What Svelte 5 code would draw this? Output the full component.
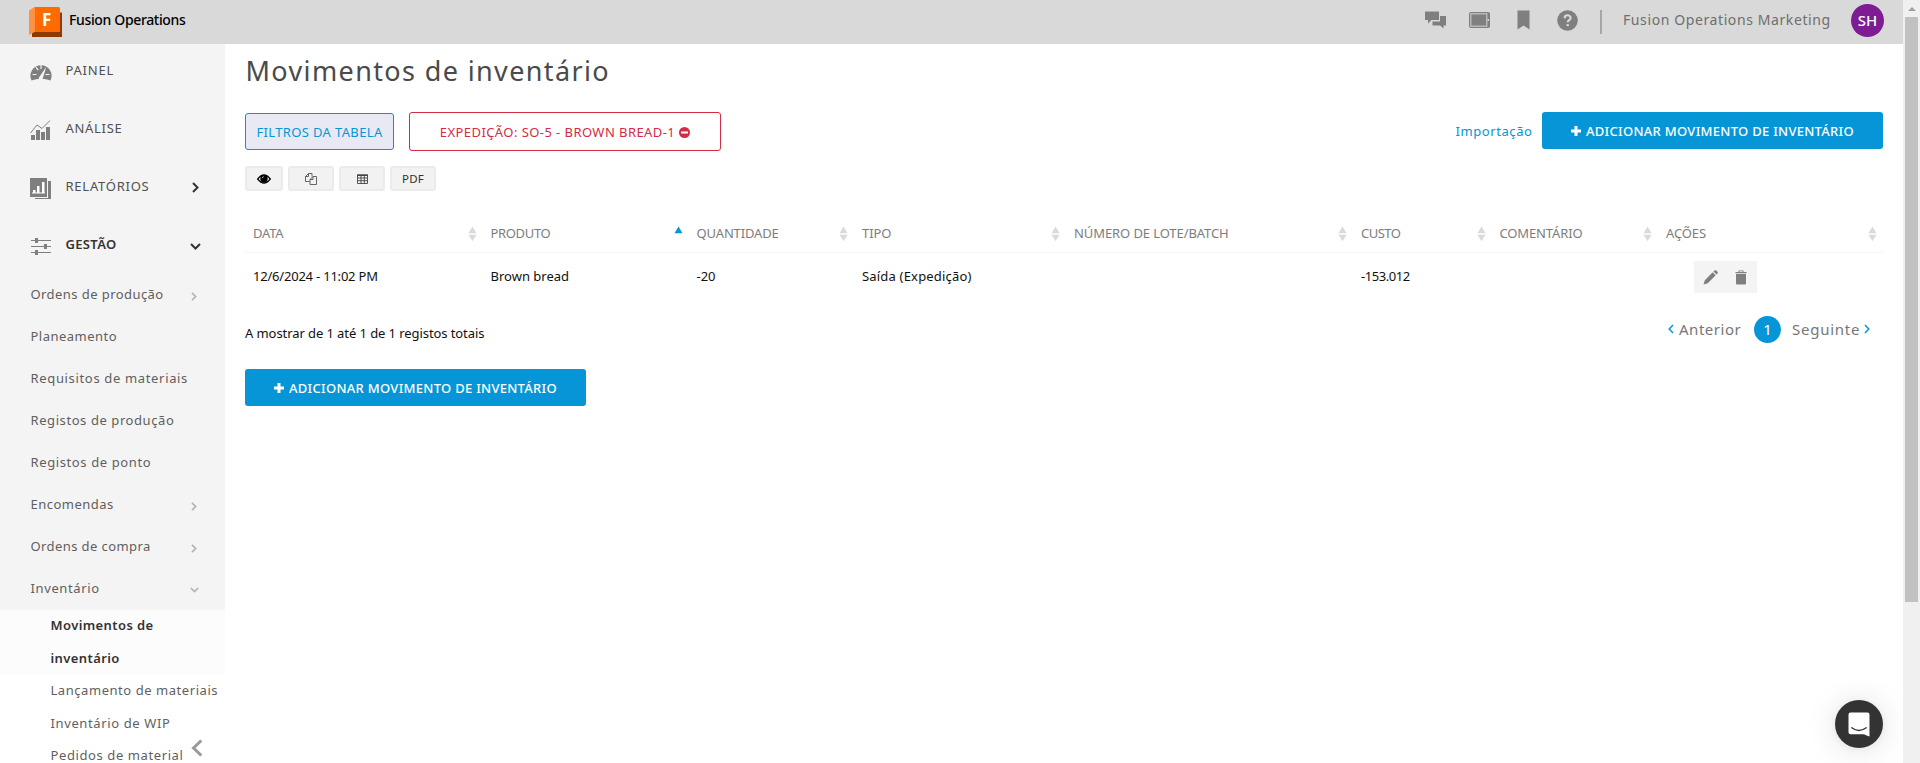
<script>
  const sections = [
    { label: 'PAINEL', icon: 'gauge', spacing: 0.79 },
    { label: 'ANÁLISE', icon: 'chart', spacing: 0.7 },
    { label: 'RELATÓRIOS', icon: 'report', spacing: 0.75, arrow: 'right' },
    { label: 'GESTÃO', icon: 'sliders', spacing: 0.34, arrow: 'down', active: true }
  ];

  const management = [
    { label: 'Ordens de produção', spacing: 0.43, arrow: 'right' },
    { label: 'Planeamento', spacing: 0.48 },
    { label: 'Requisitos de materiais', spacing: 0.66 },
    { label: 'Registos de produção', spacing: 0.58 },
    { label: 'Registos de ponto', spacing: 0.61 },
    { label: 'Encomendas', spacing: 0.48, arrow: 'right' },
    { label: 'Ordens de compra', spacing: 0.41, arrow: 'right' },
    { label: 'Inventário', spacing: 0.62, arrow: 'down' }
  ];

  const inventory = [
    { label: 'Movimentos de inventário', spacing: 0.4, active: true },
    { label: 'Lançamento de materiais', spacing: 0.55 },
    { label: 'Inventário de WIP', spacing: 0.62 },
    { label: 'Pedidos de material', spacing: 0.6 }
  ];

  const columns = [
    { label: 'DATA', spacing: -0.22, value: '12/6/2024 - 11:02 PM', valueSpacing: -0.21 },
    { label: 'PRODUTO', spacing: -0.34, value: 'Brown bread', valueSpacing: 0, sorted: true },
    { label: 'QUANTIDADE', spacing: -0.15, value: '-20', valueSpacing: 0 },
    { label: 'TIPO', spacing: -0.07, value: 'Saída (Expedição)', valueSpacing: 0.19 },
    { label: 'NÚMERO DE LOTE/BATCH', spacing: -0.09, value: '', valueSpacing: 0 },
    { label: 'CUSTO', spacing: -0.5, value: '-153.012', valueSpacing: -0.44 },
    { label: 'COMENTÁRIO', spacing: -0.13, value: '', valueSpacing: 0 },
    { label: 'AÇÕES', spacing: -0.1, actions: true }
  ];
</script>

{#snippet plus()}
  <svg class="plus" width="10" height="10" viewBox="0 0 10 10"><path d="M3.500 0h3v3.500H10v3H6.500V10h-3V6.500H0v-3h3.500z" fill="#fff" /></svg>
{/snippet}

{#snippet chevron(dir, cls)}
  {#if dir === 'right'}
    <svg class="{cls} right" width="7" height="11" viewBox="0 0 7 11"><path d="M1 1l4.500 4.500L1 10" fill="none" stroke="currentColor" /></svg>
  {:else}
    <svg class="{cls} down" width="11" height="7" viewBox="0 0 11 7"><path d="M1 1l4.500 4.500L10 1" fill="none" stroke="currentColor" /></svg>
  {/if}
{/snippet}

<div class="app">
  <div class="page">
    <header>
      <svg class="logo" width="33" height="30" viewBox="0 0 33 30">
        <path d="M3 25h25V5.500h5V30H3z" fill="#8f3a02" />
        <path d="M0 3.500L5.500 0v25L0 28z" fill="#ff9145" />
        <path d="M5.500 0H29.500q1.500 0 1.500 1.500V25H5.500z" fill="#ff6b00" />
        <text x="13" y="18.500">F</text>
      </svg>
      <strong class="brand">Fusion Operations</strong>
      <div class="tools">
        <svg class="t-chat" width="22" height="18" viewBox="0 0 22 18"><path d="M0 .5h14v8.500H6.500L3 12.500V9H0z" fill="#7f7f7f" /><path d="M15 5h6v9.500h-2.500V17.500L15 14.500H7.500V10.500H15z" fill="#7f7f7f" /></svg>
        <svg class="t-tablet" width="21" height="16" viewBox="0 0 21 16"><rect x=".5" y=".5" width="20" height="15" rx="1" fill="#b8b8b8" stroke="#7f7f7f" /><rect x="2.500" y="2.500" width="14.500" height="11" fill="#7f7f7f" /><path d="M18.500 1h2v14h-2z" fill="#7f7f7f" /><circle cx="19.300" cy="8" r="1" fill="#d9d9d9" /></svg>
        <svg class="t-mark" width="13" height="20" viewBox="0 0 13 20"><path d="M.5.5h12v19l-6-4-6 4z" fill="#7f7f7f" /></svg>
        <svg class="t-help" width="21" height="21" viewBox="0 0 21 21"><circle cx="10.500" cy="10.500" r="10.300" fill="#7f7f7f" /><path d="M7.600 8.200c0-3.800 6-3.800 6-.2 0 2.200-2.900 2.200-2.900 4.300" fill="none" stroke="#d9d9d9" stroke-width="2.100" /><path d="M9.600 14h2.200v2.200H9.600z" fill="#d9d9d9" /></svg>
        <i class="divider"></i>
        <span class="company">Fusion Operations Marketing</span>
        <span class="avatar">SH</span>
      </div>
    </header>

    <div class="body">
      <aside>
        <ul class="sections">
          {#each sections as s}
            <li class:active={s.active}>
              <span class="icon">
                {#if s.icon === 'gauge'}
                  <svg width="22" height="22" viewBox="0 0 22 22"><path d="M1.500 19.500A10.600 10.600 0 1 1 20.500 19.500L17 18.500q-6-1.500-12 0z" fill="#7f7f7f" /><path d="M11 4v4M5.800 6.200l2.500 3M2.500 13.500h4M15.500 13.500h4" stroke="#f4f4f4" stroke-width="1.200" /><path d="M16.300 5.800L12.800 17.200a2 2 0 1 1-3.300-1.500z" fill="#f4f4f4" /></svg>
                {:else if s.icon === 'chart'}
                  <svg width="22" height="22" viewBox="0 0 22 22"><path d="M1 16h4v5H1zM6 11h4v10H6zM11 13h4v8h-4zM16 8h4v13h-4z" fill="#7f7f7f" /><path d="M.5 14L7 6l5 3.500L20 1.500" fill="none" stroke="#7f7f7f" /></svg>
                {:else if s.icon === 'report'}
                  <svg width="22" height="22" viewBox="0 0 22 22"><path d="M0 1h17v19H0z" fill="#7f7f7f" /><path d="M18 4h3v18H5v-1h13z" fill="#7f7f7f" /><path d="M2 15.500h13v1H2zM3 13h2.500v3H3zM7 9h2.500v7H7zM12 5h2.500v11H12z" fill="#fff" /></svg>
                {:else}
                  <svg width="22" height="22" viewBox="0 0 22 22"><path d="M1 5.500h20M1 11.500h20M1 17.500h20" stroke="#7f7f7f" /><path d="M5 3h3v5H5zM14 9h3v5h-3zM5 15h3v5H5z" fill="#7f7f7f" /></svg>
                {/if}
              </span>
              <span class="label" style:letter-spacing="{s.spacing}px">{s.label}</span>
              {#if s.arrow}{@render chevron(s.arrow, 'arrow big')}{/if}
            </li>
          {/each}
        </ul>
        <ul class="management">
          {#each management as m}
            <li>
              <span style:letter-spacing="{m.spacing}px">{m.label}</span>
              {#if m.arrow}{@render chevron(m.arrow, 'arrow small')}{/if}
            </li>
          {/each}
        </ul>
        <ul class="inventory">
          {#each inventory as i}
            <li class:active={i.active}><p style:letter-spacing="{i.spacing}px">{i.label}</p></li>
          {/each}
        </ul>
        <svg class="collapse" width="12" height="18" viewBox="0 0 12 18"><path d="M10.300 1.500L2.500 9l7.800 7.500" fill="none" stroke="#999" stroke-width="3" /></svg>
      </aside>

      <main>
        <h1>Movimentos de inventário</h1>

        <div class="filters">
          <button class="filter">FILTROS DA TABELA</button>
          <button class="chip">
            <span>EXPEDIÇÃO: SO-5 - BROWN BREAD-1</span>
            <svg width="11" height="11" viewBox="0 0 11 11"><circle cx="5.500" cy="5.500" r="5.500" fill="#d22d45" /><path d="M2 4.500h7v2H2z" fill="#fff" /></svg>
          </button>
          <a class="import" href="#import">Importação</a>
          <button class="add">{@render plus()}<span>ADICIONAR MOVIMENTO DE INVENTÁRIO</span></button>
        </div>

        <div class="exports">
          <button class="eye"><svg width="14" height="10" viewBox="0 0 14 10"><path d="M.7 5Q7-3 13.300 5 7 13 .7 5z" fill="none" stroke="#000" stroke-width="1.300" /><circle cx="7" cy="4.700" r="3.700" /><path d="M5.200 4.300Q5.400 2.800 6.800 2.600" fill="none" stroke="#fff" stroke-width=".7" /></svg></button>
          <button><svg width="12" height="12" viewBox="0 0 12 12" fill="none" stroke="#555" stroke-width=".9"><path d="M3.500.5h3.500v3M3.500.5L.5 3.500v5h4M.5 3.500h3v-3M8 3.500h3.500v8H5V6.500zM8 3.500v3H5" /></svg></button>
          <button><svg width="11" height="10" viewBox="0 0 11 10"><path d="M.5 1h10v8.500H.5zM.5 4h10M.5 6.700h10M4 1v8.500M7.300 1v8.500" fill="none" stroke="#444" stroke-width=".9" /><path d="M0 .5h11v1.500H0z" fill="#444" /></svg></button>
          <button>PDF</button>
        </div>

        <div class="table">
          <div class="row head">
            {#each columns as c}
              <div class="cell">
                <span style:letter-spacing="{c.spacing}px">{c.label}</span>
                <svg width="9" height="16" viewBox="0 0 9 16">
                  <path d="M4.500 .5L8.500 7.200H.5z" fill={c.sorted ? '#0696d7' : '#dadada'} />
                  {#if !c.sorted}<path d="M.5 8.700h8L4.500 15.300z" fill="#dadada" />{/if}
                </svg>
              </div>
            {/each}
          </div>
          <div class="row data">
            {#each columns as c}
              <div class="cell">
                {#if c.actions}
                  <div class="actions">
                    <svg width="15" height="15" viewBox="0 0 15 15"><path d="M.5 14.500l1.300-4.300L9.700 2.300l3 3-7.900 7.900zM10.500 1.500l1-1q.9-.7 1.700 0l1.300 1.300q.7.9 0 1.700l-1 1z" fill="#7f7f7f" /></svg>
                    <svg width="12" height="15" viewBox="0 0 12 15"><path d="M1 4h10v9.500q0 1-1 1H2q-1 0-1-1zM.5 2h11v1.200H.5zM3.500 2V.5h5V2h-1v-.7h-3V2z" fill="#7f7f7f" /></svg>
                  </div>
                {:else}
                  <span style:letter-spacing="{c.valueSpacing}px">{c.value}</span>
                {/if}
              </div>
            {/each}
          </div>
        </div>

        <div class="footer">
          <span class="info">A mostrar de 1 até 1 de 1 registos totais</span>
          <div class="pager">
            <svg width="6" height="10" viewBox="0 0 6 10"><path d="M5 1L1.200 5 5 9" fill="none" stroke="#0696d7" stroke-width="1.500" /></svg>
            <span class="prev">Anterior</span>
            <b>1</b>
            <span class="next">Seguinte</span>
            <svg width="6" height="10" viewBox="0 0 6 10"><path d="M1 1l3.800 4L1 9" fill="none" stroke="#0696d7" stroke-width="1.500" /></svg>
          </div>
        </div>

        <button class="add">{@render plus()}<span>ADICIONAR MOVIMENTO DE INVENTÁRIO</span></button>
      </main>
    </div>

    <div class="messenger">
      <svg width="22" height="25" viewBox="0 0 22 25"><path d="M2.500.5h17q2 0 2 2V24.500q-3-.8-5.500-2.300H2.500q-2 0-2-2V2.500q0-2 2-2z" fill="#fff" /><path d="M3.800 15.800q7 5.400 14.400 0" fill="none" stroke="#333" stroke-width="1.400" stroke-linecap="round" /></svg>
    </div>
  </div>

  <div class="scrollbar"><i class="up"></i><i class="thumb"></i></div>
</div>

<style>
  :global(body) { background: #fff; overflow: hidden; }
  .app {
    display: flex;
    height: 763px;
    overflow: hidden;
    font: 400 13px "Noto Sans", "Open Sans", sans-serif;
    color: #111;
  }
  .page { position: relative; width: 1903px; flex: none; }
  ul { list-style: none; margin: 0; padding: 0; }
  svg { display: block; flex: none; }
  button {
    display: flex;
    align-items: center;
    justify-content: center;
    flex: none;
    box-sizing: border-box;
    margin: 0;
    padding: 0;
    border: 0;
    font: inherit;
    white-space: nowrap;
  }

  header {
    display: flex;
    align-items: center;
    height: 44px;
    padding: 0 19px 0 29px;
    background: #d9d9d9;
    font-size: 14px;
  }
  .logo { margin-bottom: 1px; }
  .logo text { font: 700 17px "Noto Sans", sans-serif; fill: #fff; }
  .brand { margin: 0 0 5px 7px; font-weight: 500; letter-spacing: -.35px; color: #000; }
  .tools { display: flex; align-items: center; height: 40px; margin: 0 0 4px auto; }
  .t-tablet { margin-left: 22px; }
  .t-mark { margin-left: 27px; }
  .t-help { margin-left: 27px; }
  .divider { width: 2px; height: 24px; margin: 3px 0 0 22px; background: #a6a6a6; }
  .company { width: 205px; margin: 0 23px 1px 21px; letter-spacing: .6px; color: #6e6e6e; white-space: nowrap; }
  .avatar {
    width: 33px;
    height: 33px;
    margin-top: 1px;
    border-radius: 50%;
    background: #7d1c93;
    color: #fff;
    font-size: 15px;
    font-weight: 500;
    line-height: 32px;
    text-align: center;
  }

  .body { display: flex; height: 719px; }
  aside { position: relative; width: 225px; flex: none; background: #f4f4f4; overflow: hidden; }
  .sections li { display: flex; align-items: center; height: 58px; padding: 0 24px 0 30px; color: #505050; }
  .icon { width: 22px; margin: 0 14px 3px -.5px; }
  .label { padding-bottom: 6px; }
  .arrow { margin-left: auto; }
  .arrow.big { stroke-width: 2; color: #333; margin-bottom: 2px; }
  .arrow.big.right { margin-right: 2px; margin-bottom: 3px; }
  .sections .active { color: #333; font-weight: 600; }
  .management { margin-top: -3px; padding-bottom: 1px; }
  .management li { display: flex; align-items: center; height: 42px; padding: 0 27px 0 30.500px; color: #5f5f5f; }
  .arrow.small { stroke-width: 2; color: #b3b3b3; margin-top: 4px; }
  .arrow.small.right { width: 6px; height: 9px; margin-right: 1px; }
  .arrow.small.down { width: 9px; height: 6px; margin-right: -1px; }
  .inventory { background: #fff; height: 160px; line-height: 32.500px; color: #5f5f5f; }
  .inventory li { padding: 0 5px 0 50.500px; }
  .inventory p { margin: 0; padding-bottom: 1px; margin-top: -1px; white-space: nowrap; }
  .inventory .active { height: 65px; background: #fcfcfc; color: #333; font-weight: 600; display: flow-root; }
  .inventory .active p { width: 120px; white-space: normal; }
  .collapse { position: absolute; left: 191px; top: 695px; }

  main { flex: 1; padding: 0 20px; }
  h1 { margin: 0; height: 53px; line-height: 53px; padding: 0 0 15px .5px; font-size: 27px; font-weight: 400; letter-spacing: 1.370px; color: #4a4a4a; }
  .filters { display: flex; align-items: center; height: 39px; }
  .filter { width: 149px; height: 37px; border: 1px solid #0696d7; border-radius: 3px; background: #e9e9f5; color: #0696d7; letter-spacing: .36px; }
  .chip { width: 312px; height: 39px; margin-left: 15px; gap: 4px; border: 1px solid #d22d45; border-radius: 3px; background: #fff; color: #d22d45; letter-spacing: .43px; }
  .chip svg { margin-top: 2px; }
  .import { margin: 0 9.500px 2px auto; color: #0696d7; text-decoration: none; letter-spacing: .58px; }
  .add { width: 341px; height: 37px; gap: 5px; border-radius: 3px; background: #0696d7; color: #fff; font-weight: 500; letter-spacing: .29px; }
  .filters .add { margin-bottom: 2px; }

  .exports { display: flex; gap: 5px; margin-top: 15px; }
  .exports button { width: 46px; height: 25px; border: 2px solid #ebebeb; border-radius: 3px; background: #f2f2f2; color: #333; font-size: 11.500px; letter-spacing: .2px; }
  .exports .eye { width: 38px; }

  .table { margin-top: 23px; }
  .row { display: grid; grid-template-columns: 237.500px 206px 165.500px 212px 287px 138.500px 166.500px 225px; }
  .cell { display: flex; align-items: center; padding: 0 5.500px 0 8px; white-space: nowrap; }
  .head { height: 38px; border-bottom: 1px solid #f5f5f5; color: #7d7d7d; }
  .head svg { margin: 2px .5px 0 auto; }
  .data { height: 48px; }
  .data .cell span { padding-bottom: 2px; }
  .actions { display: flex; align-items: center; justify-content: space-between; box-sizing: border-box; width: 63px; height: 32px; margin-left: 27.500px; padding: 0 10px 0 9px; background: #f4f4f4; }

  .footer { display: flex; justify-content: space-between; margin-top: 15px; height: 53px; }
  .info { line-height: 34px; letter-spacing: -.08px; }
  .pager { display: flex; align-items: center; height: 27px; margin-top: -.5px; padding-right: 13px; font-size: 15px; color: #777; }
  .pager span { padding-bottom: 1px; }
  .prev { width: 62px; margin: 0 13px 0 5px; letter-spacing: .52px; }
  .pager b { width: 27px; height: 27px; border-radius: 50%; background: #0696d7; color: #fff; font-weight: 400; line-height: 27px; text-align: center; }
  .next { width: 68px; margin: 0 4px 0 11px; letter-spacing: .75px; }

  .messenger {
    position: absolute;
    left: 1835px;
    top: 700px;
    display: flex;
    align-items: center;
    justify-content: center;
    width: 48px;
    height: 48px;
    border-radius: 50%;
    background: #333;
    box-shadow: 0 1px 6px rgba(0, 0, 0, .06), 0 2px 32px rgba(0, 0, 0, .12);
  }

  .scrollbar { position: relative; z-index: 1; display: flex; flex-direction: column; align-items: center; width: 17px; background: #f0f0f0; }
  .up { height: 0; margin: 7px 0 6px; border: 4px solid transparent; border-top: 0; border-bottom-color: #a0a0a0; }
  .thumb { width: 13px; height: 585px; background: #c1c1c1; }
</style>
